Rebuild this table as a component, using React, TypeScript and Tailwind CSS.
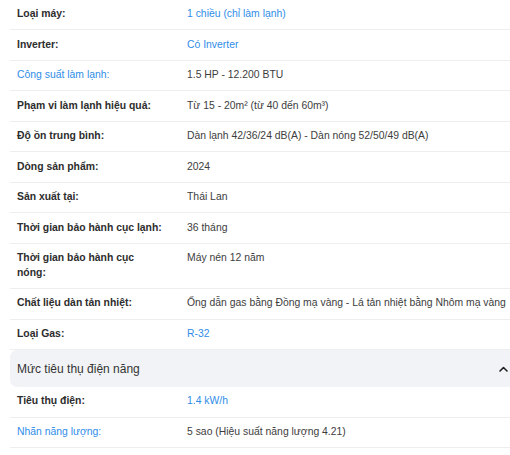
import React from "react";

type Row = { label: string; value: string; labelLink?: boolean; valueLink?: boolean };

const rows1: Row[] = [
  { label: "Loại máy:", value: "1 chiều (chỉ làm lạnh)", valueLink: true },
  { label: "Inverter:", value: "Có Inverter", valueLink: true },
  { label: "Công suất làm lạnh:", value: "1.5 HP - 12.200 BTU", labelLink: true },
  { label: "Phạm vi làm lạnh hiệu quả:", value: "Từ 15 - 20m² (từ 40 đến 60m³)" },
  { label: "Độ ồn trung bình:", value: "Dàn lạnh 42/36/24 dB(A) - Dàn nóng 52/50/49 dB(A)" },
  { label: "Dòng sản phẩm:", value: "2024" },
  { label: "Sản xuất tại:", value: "Thái Lan" },
  { label: "Thời gian bảo hành cục lạnh:", value: "36 tháng" },
  { label: "Thời gian bảo hành cục nóng:", value: "Máy nén 12 năm" },
  { label: "Chất liệu dàn tản nhiệt:", value: "Ống dẫn gas bằng Đồng mạ vàng - Lá tản nhiệt bằng Nhôm mạ vàng" },
  { label: "Loại Gas:", value: "R-32", valueLink: true },
];

const rows2: Row[] = [
  { label: "Tiêu thụ điện:", value: "1.4 kW/h", valueLink: true },
  { label: "Nhãn năng lượng:", value: "5 sao (Hiệu suất năng lượng 4.21)", labelLink: true },
];

function SpecRow({ r }: { r: Row }) {
  return (
    <div className="flex text-[10.4px] leading-[14.7px] py-[7.4px] border-b border-[#eeeeee]">
      <div
        className={
          "w-[177px] shrink-0 pl-[7px] pr-[25px] " +
          (r.labelLink ? "text-[#2f8de8] font-normal" : "text-[#2d2d2d] font-bold")
        }
      >
        {r.label}
      </div>
      <div className={"flex-1 whitespace-nowrap " + (r.valueLink ? "text-[#2f8de8]" : "text-[#3d3d3d]")}>
        {r.value}
      </div>
    </div>
  );
}

export default function App() {
  return (
    <div className="w-[510px] h-[455px] overflow-hidden bg-white" style={{ fontFamily: '"Liberation Sans", Arial, sans-serif' }}>
      <div className="ml-[10px] w-[506px]">
        {rows1.map((r, i) => (
          <SpecRow key={i} r={r} />
        ))}
        <div className="flex items-center justify-between h-[37px] bg-[#f2f3f6] rounded-l-[7px] pl-[7px] pr-[8px]">
          <span className="text-[12px] text-[#333333]">Mức tiêu thụ điện năng</span>
          <svg width="9" height="6" viewBox="0 0 9 6" fill="none">
            <path d="M1 5L4.5 1.5L8 5" stroke="#222" strokeWidth="1.6" strokeLinecap="round" strokeLinejoin="round" />
          </svg>
        </div>
        {rows2.map((r, i) => (
          <SpecRow key={i} r={r} />
        ))}
      </div>
    </div>
  );
}
